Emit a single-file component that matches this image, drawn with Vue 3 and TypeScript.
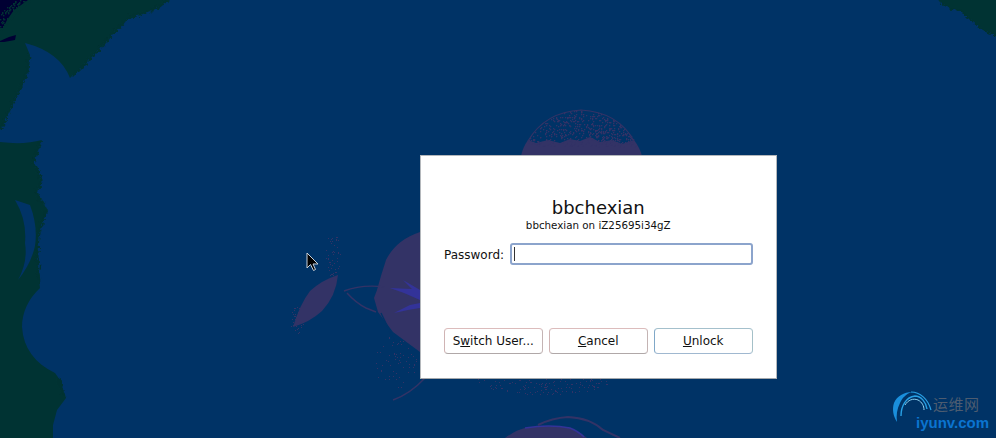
<script setup lang="ts">
function rng(seed: number) {
  let s = seed
  return () => {
    s = (s * 16807) % 2147483647
    return s / 2147483647
  }
}
interface Dot { x: number; y: number }
function speckle(seed: number, n: number, test: (x: number, y: number) => boolean, x0: number, y0: number, w: number, h: number): Dot[] {
  const r = rng(seed)
  const out: Dot[] = []
  for (let i = 0; i < n; i++) {
    const x = Math.round(x0 + r() * w)
    const y = Math.round(y0 + r() * h)
    if (test(x, y)) out.push({ x, y })
  }
  return out
}
const inEllipse = (x: number, y: number, cx: number, cy: number, rx: number, ry: number) =>
  ((x - cx) / rx) ** 2 + ((y - cy) / ry) ** 2 < 1

const topDots = speckle(7, 800, (x, y) => (x - 581) ** 2 + (y - 172.5) ** 2 < 62 * 62, 521, 110, 121, 36)
const lowDots = speckle(11, 170, (x, y) => inEllipse(x, y, 545, 379, 68, 16), 477, 379, 136, 16)
const leftDots = [
  ...speckle(13, 70, (x, y) => inEllipse(x, y, 333, 255, 8, 22), 325, 233, 16, 44),
  ...speckle(19, 70, (x, y) => inEllipse(x, y, 298, 320, 8, 14), 290, 306, 16, 28),
  ...speckle(23, 80, (x, y) => inEllipse(x, y, 395, 362, 22, 26), 373, 336, 44, 52),
]
const navyDots = speckle(17, 260, (x, y) => x + y < 32 && x + y > 13, 0, 0, 32, 32)
</script>

<template>
  <div class="screen">
    <svg class="wallpaper" viewBox="0 0 996 438" width="996" height="438" aria-hidden="true">
      <defs>
        <filter id="rough" x="-5%" y="-5%" width="110%" height="110%">
          <feTurbulence type="fractalNoise" baseFrequency="0.3" numOctaves="2" seed="4" />
          <feDisplacementMap in="SourceGraphic" scale="7" xChannelSelector="R" yChannelSelector="G" />
        </filter>
      </defs>
      <rect width="996" height="438" fill="#003366" />
      <path fill="#003333" d="M0 0H170L152 10 127 18 112 34 98 50 82 66 70 78Q60 52 25 43L30 55 27 72 18 92 8 112 0 130ZM0 142Q24 145 42 140L36 152 33 163 38 172 41 180 36 194 44 205 48 210 42 222 38 236 37 256 39 280 40 288Q22 305 22 327 24 358 55 373L60 380 64 392 66 398 57 410 53 425 53 438H0Z" />
      <g filter="url(#rough)" fill="none" stroke="#003333" stroke-width="3">
        <path d="M168 0 152 10 127 18 112 34 98 50 82 66 72 76" />
        <path d="M29 55 27 72 18 92 8 112 0 130" />
        <path d="M40 142 36 152 33 163 38 172 41 180 36 194 44 205" />
        <path d="M46 210 42 222 38 236 37 256 39 284" />
        <path d="M58 378 60 384 64 396" />
        <path d="M940 0 950 8 962 10 972 20 984 30 996 34" />
      </g>
      <path fill="#003366" d="M15 200 30 205Q38 226 35 246 31 264 18 280 28 262 25 243 27 220 15 200Z" />
      <path fill="#003333" d="M938 0 950 8 962 10 972 20 984 30 996 34V0Z" />
      <path fill="#000033" d="M0 0H28L14 10 7 20 3 28H0ZM0 41 9 37 16 35 15 40 4 42 0 42Z" />
      <rect v-for="d in navyDots" :key="'n' + d.x + '-' + d.y" :x="d.x" :y="d.y" width="1.4" height="1.4" fill="#003333" />

      <path fill="#333366" d="M521 156Q523 147 528 140L536 143 548 140 560 143 570 139 580 141 590 137 600 142 612 140 622 144 634 140Q640 148 642 156Z" />
      <path fill="none" stroke="#333366" stroke-width="1.2" d="M528 141Q545 112 581 110 618 112 634 141" />
      <rect v-for="d in topDots" :key="'t' + d.x + '-' + d.y" :x="d.x" :y="d.y" width="1.3" height="1.3" fill="#333366" />

      <rect v-for="d in lowDots" :key="'l' + d.x + '-' + d.y" :x="d.x" :y="d.y" width="1" height="1" fill="#333366" />
      <path fill="#333366" d="M505 438Q516 430 525 428 550 424 570 428 580 432 587 438Z" />
      <path fill="none" stroke="#333399" stroke-width="1.5" d="M525 428Q550 424 570 428 578 431 584 437" />
      <path fill="none" stroke="#333366" stroke-width="2" d="M538 425Q552 418 568 417 590 418 603 430L620 438" />

      <path fill="#333366" d="M420 232Q396 240 386 260 381 275 377 290L374 298 378 312 393 332 420 352Z" />
      <path fill="none" stroke="#003366" stroke-width="1.4" d="M381 313 394 340" />
      <path fill="#333399" d="M420 290 403 280 412 289 390 288 404 293 420 300ZM420 303 410 305 394 313 408 310 420 308Z" />
      <path fill="#333366" d="M338 275Q322 280 310 291 300 304 293 327 310 322 322 311 336 296 338 275Z" />
      <path fill="none" stroke="#333366" stroke-width="1.4" d="M344 291Q362 284 385 287M347 293Q356 303 366 308L376 312" />
      <path fill="none" stroke="#333366" stroke-width="1.4" d="M393 400Q410 394 425 378" />
      <rect v-for="d in leftDots" :key="'x' + d.x + '-' + d.y" :x="d.x" :y="d.y" width="1" height="1" fill="#333366" />
    </svg>

    <main class="dialog">
      <h1 class="name">bbchexian</h1>
      <p class="host">bbchexian on iZ25695i34gZ</p>
      <div class="password-row">
        <label class="label" for="pw">Password:</label>
        <div class="entry" id="pw"><span class="caret"></span></div>
      </div>
      <div class="buttons">
        <button class="btn warm">S<u>w</u>itch User...</button>
        <button class="btn warm"><u>C</u>ancel</button>
        <button class="btn cool"><u>U</u>nlock</button>
      </div>
    </main>

    <svg class="cursor" viewBox="0 0 13 20" width="13" height="20" aria-hidden="true">
      <path fill="#000" stroke="#c8d0d8" stroke-width="1" d="M1 1V16L4.5 12.5 7.5 18.5 9.5 17.5 7 12H12Z" />
    </svg>

    <div class="watermark">
      <svg class="swirl" viewBox="0 0 40 36" width="40" height="36" aria-hidden="true">
        <path fill="#1a8fdc" d="M5 31C1 25 0 18 2 12 5 5 12 1 20 1 14 3 10 7 8 12 5 18 4 24 5 31Z" />
        <path fill="none" stroke="#28a0e4" stroke-width="1.2" d="M19 1C28 1 36 8 39 19" />
        <path fill="none" stroke="#28a0e4" stroke-width="1.4" d="M9 25C9 15 14 6 23 5 29 5 34 11 35 18" />
        <path fill="none" stroke="#8cd0f0" stroke-width="1" d="M13 14C16 9 21 7 26 9 30 11 32 15 32 19" />
      </svg>
      <div class="mark-text">
        <span class="cn">运维网</span>
        <span class="en">iyunv.com</span>
      </div>
    </div>
  </div>
</template>

<style>
html, body { margin: 0; background: #003366; }
</style>

<style scoped>
.screen {
  position: relative;
  width: 996px;
  height: 438px;
  overflow: hidden;
  box-sizing: border-box;
  padding: 155px 0 0 420px;
  font-family: "DejaVu Sans", sans-serif;
  color: #111;
}
.wallpaper { position: absolute; inset: 0; }
.dialog {
  position: relative;
  box-sizing: border-box;
  width: 357px;
  height: 224px;
  background: #fff;
  border: 1px solid #b4b8bc;
  border-bottom-color: #a4a8ac;
  padding: 41px 23.5px 0 23px;
  display: flex;
  flex-direction: column;
}
.name {
  margin: 0;
  font-size: 18px;
  font-weight: 400;
  line-height: 22px;
  text-align: center;
}
.host {
  margin: 0;
  font-size: 10.3px;
  line-height: 13px;
  text-align: center;
}
.password-row {
  display: flex;
  align-items: flex-start;
  gap: 6px;
  margin-top: 11px;
}
.label { font-size: 12px; line-height: 22px; padding-top: 1px; margin-bottom: -1px; }
.entry {
  flex: 1;
  height: 22px;
  box-sizing: border-box;
  border: 2px solid #8ca4cc;
  border-radius: 3px;
  display: flex;
  align-items: center;
  padding-left: 2px;
}
.caret { width: 1px; height: 14px; background: #333; }
.buttons {
  display: flex;
  gap: 6.5px;
  margin-top: 63px;
}
.btn {
  flex: 1;
  box-sizing: border-box;
  height: 26px;
  padding: 0;
  background: #fff;
  border: 1.5px solid #c8b4b4;
  border-radius: 4px;
  font: 12px "DejaVu Sans", sans-serif;
  color: #111;
}
.warm { border-color: #dcbcbc #c4b4b4 #b0a8a8 #d0b4b4; }
.cool { border-color: #a4c0cc #a4c0c8 #a0b8d0 #80a8c8; }
.cursor { position: absolute; left: 306px; top: 252px; }
.watermark {
  position: absolute;
  left: 892px;
  top: 391px;
  display: flex;
}
.swirl { display: block; }
.mark-text {
  display: flex;
  flex-direction: column;
  align-items: flex-start;
  margin-left: -16px;
  padding-top: 2px;
}
.cn {
  font-family: "Noto Sans CJK SC", sans-serif;
  font-size: 15px;
  line-height: 22px;
  color: #4d5c70;
  margin-left: 17px;
  letter-spacing: 0.5px;
}
.en {
  font-family: "Liberation Sans", sans-serif;
  font-weight: 700;
  font-size: 15px;
  line-height: 15px;
  color: #0b74d0;
}
</style>
